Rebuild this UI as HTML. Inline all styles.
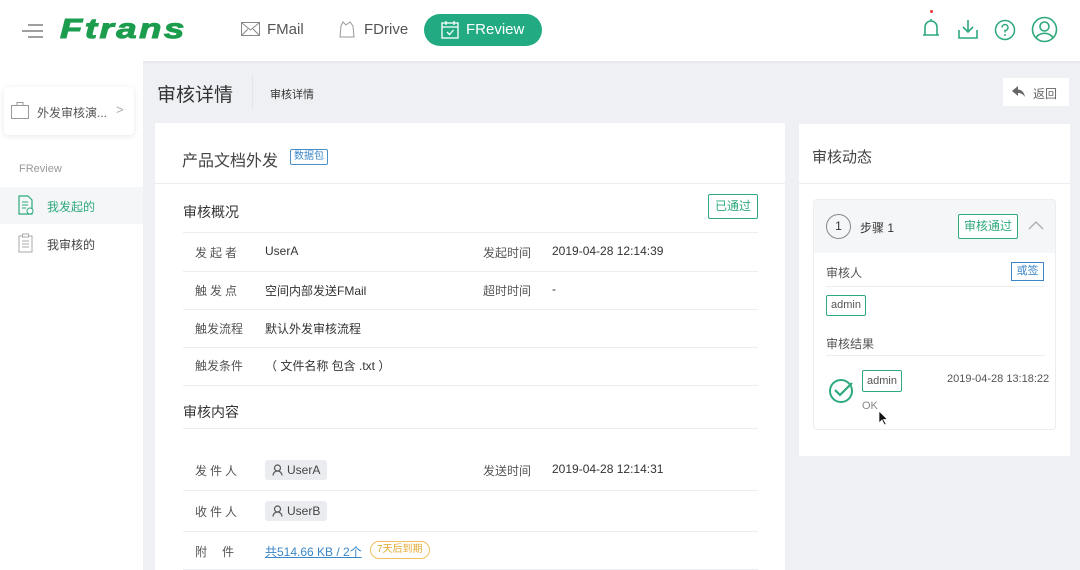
<!DOCTYPE html>
<html><head><meta charset="utf-8"><style>
*{margin:0;padding:0;box-sizing:border-box}
body{width:1080px;height:570px;overflow:hidden;background:#eef0f3;font-family:"Liberation Sans","Noto Sans CJK SC",sans-serif;color:#333;position:relative;font-size:12px}
.a{position:absolute;white-space:nowrap}
.hdr{position:absolute;left:0;top:0;width:1080px;height:61px;background:#fff;box-shadow:0 1px 3px rgba(0,0,0,.06)}
.side{position:absolute;left:0;top:61px;width:143px;height:509px;background:#fff}
.card{position:absolute;background:#fff}
.ln{position:absolute;height:1px;background:#ebedf0}
.lb{color:#555;font-size:12px}
.tag{position:absolute;border:1px solid #2eaa7c;color:#2eaa7c;border-radius:2px;background:#fff;font-size:12px;text-align:center}
.user{position:absolute;background:#ebecef;border-radius:3px;height:20px;padding:0 7px 0 22px;font-size:12px;line-height:20px;color:#444}
</style></head><body>
<div class="hdr">
 <svg class="a" style="left:22px;top:24px" width="22" height="14"><path d="M6 1H21M0 7H21M6 13H21" stroke="#666" stroke-width="1.2"/></svg>
 <div class="a" style="left:60px;top:13px;font-size:28px;font-weight:900;font-style:italic;color:#1c9d4e;letter-spacing:2px;transform:scaleX(1.3);transform-origin:left center;-webkit-text-stroke:1px #1c9d4e">Ftrans</div>
 <svg class="a" style="left:241px;top:22px" width="19" height="14"><rect x=".5" y=".5" width="18" height="13" fill="none" stroke="#888"/><path d="M1 1L9.5 8L18 1M1 13L7 7M18 13L12 7" stroke="#888" fill="none"/></svg>
 <div class="a" style="left:267px;top:21px;font-size:15px;color:#555">FMail</div>
 <svg class="a" style="left:338px;top:20px" width="18" height="19"><path d="M3 6L2 17H16L15 6L12 2L8 5L5 2Z" fill="none" stroke="#999"/></svg>
 <div class="a" style="left:364px;top:21px;font-size:15px;color:#555">FDrive</div>
 <div class="a" style="left:424px;top:14px;width:118px;height:32px;border-radius:16px;background:#22ab82"></div>
 <svg class="a" style="left:441px;top:20px" width="18" height="19"><rect x="1" y="3" width="16" height="15" fill="none" stroke="#fff" stroke-width="1.3"/><path d="M1 7H17M5 1V5M13 1V5M6 12L8.5 14.5L12.5 10" stroke="#fff" fill="none" stroke-width="1.3"/></svg>
 <div class="a" style="left:466px;top:21px;font-size:15px;color:#fff">FReview</div>
 <div class="a" style="left:930px;top:10px;width:3px;height:3px;border-radius:50%;background:#e33"></div>
 <svg class="a" style="left:921px;top:16px" width="20" height="26"><path d="M4 19V11A6 6 0 0 1 16 11V19M2 19H18M10 3V5" stroke="#2eaa7c" stroke-width="1.6" fill="none"/></svg>
 <svg class="a" style="left:957px;top:19px" width="22" height="22"><path d="M11 1V13M6 8L11 13L16 8M2 11V19H20V11" stroke="#2eaa7c" stroke-width="1.6" fill="none"/></svg>
 <svg class="a" style="left:994px;top:19px" width="22" height="22"><circle cx="11" cy="11" r="9.5" stroke="#2eaa7c" stroke-width="1.5" fill="none"/><path d="M8 8.5A3 3 0 1 1 11 11.5V13.5" stroke="#2eaa7c" stroke-width="1.5" fill="none"/><circle cx="11" cy="16" r="1" fill="#2eaa7c"/></svg>
 <svg class="a" style="left:1031px;top:16px" width="27" height="27"><circle cx="13.5" cy="13.5" r="12" stroke="#2eaa7c" stroke-width="1.6" fill="none"/><circle cx="13.5" cy="10.5" r="4.5" stroke="#2eaa7c" stroke-width="1.6" fill="none"/><path d="M5 22A9 7 0 0 1 22 22" stroke="#2eaa7c" stroke-width="1.6" fill="none"/></svg>
</div>
<div class="side">
 <div class="a" style="left:4px;top:26px;width:130px;height:48px;background:#fff;border-radius:4px;box-shadow:0 1px 6px rgba(0,0,0,.1)"></div>
 <svg class="a" style="left:11px;top:41px" width="18" height="17"><rect x=".5" y="3.5" width="17" height="13" fill="none" stroke="#999"/><path d="M6 3.5V.5H12V3.5" fill="none" stroke="#999"/></svg>
 <div class="a" style="left:37px;top:43px;font-size:12px;color:#555">外发审核演...</div>
 <div class="a" style="left:116px;top:41px;font-size:13px;color:#aaa">&gt;</div>
 <div class="a" style="left:19px;top:102px;font-size:11px;color:#999">FReview</div>
 <div class="a" style="left:0;top:126px;width:143px;height:37px;background:#f5f6f8"></div>
 <svg class="a" style="left:18px;top:134px" width="16" height="20"><path d="M1 1H10L14 5V19H1Z" fill="none" stroke="#2eaa7c" stroke-width="1.2"/><path d="M4 7H10M4 10H10M4 13H8" stroke="#2eaa7c"/><circle cx="12" cy="16" r="3" fill="#fff" stroke="#2eaa7c"/></svg>
 <div class="a" style="left:47px;top:137px;font-size:12px;color:#2eaa7c">我发起的</div>
 <svg class="a" style="left:18px;top:172px" width="16" height="20"><rect x="1" y="3" width="13" height="16" fill="none" stroke="#aaa"/><rect x="4.5" y="1" width="6" height="3" fill="#fff" stroke="#aaa"/><path d="M4 8H11M4 11H11M4 14H11" stroke="#aaa"/></svg>
 <div class="a" style="left:47px;top:175px;font-size:12px;color:#444">我审核的</div>
</div>
<div class="a" style="left:157px;top:80px;font-size:19px;color:#333">审核详情</div>
<div class="a" style="left:252px;top:75px;width:1px;height:34px;background:#e3e5e8"></div>
<div class="a" style="left:270px;top:86px;font-size:11px;color:#333">审核详情</div>
<div class="a" style="left:1003px;top:78px;width:66px;height:28px;background:#fff"></div>
<svg class="a" style="left:1012px;top:86px" width="14" height="12"><path d="M6 0L0 5L6 10V7C9 7 11 8 13 11C12 6 10 4 6 3.5Z" fill="#666"/></svg>
<div class="a" style="left:1033px;top:85px;font-size:12px;color:#666">返回</div>

<div class="card" style="left:155px;top:123px;width:630px;height:447px">
 <div class="a" style="left:27px;top:24px;font-size:16px;color:#444">产品文档外发</div>
 <div class="a" style="left:135px;top:26px;border:1px solid #4a90c8;color:#3a86c8;font-size:10px;padding:0 3px;height:16px;line-height:14px;border-radius:2px">数据包</div>
 <div class="ln" style="left:0;top:60px;width:630px"></div>
 <div class="a" style="left:28px;top:79px;font-size:14px;color:#333">审核概况</div>
 <div class="tag" style="left:553px;top:71px;width:50px;height:25px;line-height:23px">已通过</div>
 <div class="ln" style="left:28px;top:109px;width:575px"></div>
 <div class="a lb" style="left:40px;top:121px;letter-spacing:3px">发起者</div><div class="a" style="left:110px;top:121px">UserA</div>
 <div class="a lb" style="left:328px;top:121px">发起时间</div><div class="a" style="left:397px;top:121px">2019-04-28 12:14:39</div>
 <div class="ln" style="left:28px;top:148px;width:575px"></div>
 <div class="a lb" style="left:40px;top:159px;letter-spacing:3px">触发点</div><div class="a" style="left:110px;top:159px">空间内部发送FMail</div>
 <div class="a lb" style="left:328px;top:159px">超时时间</div><div class="a" style="left:397px;top:159px">-</div>
 <div class="ln" style="left:28px;top:186px;width:575px"></div>
 <div class="a lb" style="left:40px;top:197px">触发流程</div><div class="a" style="left:110px;top:197px">默认外发审核流程</div>
 <div class="ln" style="left:28px;top:224px;width:575px"></div>
 <div class="a lb" style="left:40px;top:234px">触发条件</div><div class="a" style="left:110px;top:234px">（ 文件名称 包含 .txt ）</div>
 <div class="ln" style="left:28px;top:262px;width:575px"></div>
 <div class="a" style="left:28px;top:279px;font-size:14px;color:#333">审核内容</div>
 <div class="ln" style="left:28px;top:305px;width:575px"></div>
 <div class="a lb" style="left:40px;top:339px;letter-spacing:3px">发件人</div>
 <div class="user" style="left:110px;top:337px">UserA</div>
 <svg class="a" style="left:117px;top:341px" width="11" height="12"><circle cx="5.5" cy="4" r="3" fill="none" stroke="#555" stroke-width="1.2"/><path d="M1 11.5A4.5 4.5 0 0 1 10 11.5" fill="none" stroke="#555" stroke-width="1.2"/></svg>
 <div class="a lb" style="left:328px;top:339px">发送时间</div><div class="a" style="left:397px;top:339px">2019-04-28 12:14:31</div>
 <div class="ln" style="left:28px;top:367px;width:575px"></div>
 <div class="a lb" style="left:40px;top:380px;letter-spacing:3px">收件人</div>
 <div class="user" style="left:110px;top:378px">UserB</div>
 <svg class="a" style="left:117px;top:382px" width="11" height="12"><circle cx="5.5" cy="4" r="3" fill="none" stroke="#555" stroke-width="1.2"/><path d="M1 11.5A4.5 4.5 0 0 1 10 11.5" fill="none" stroke="#555" stroke-width="1.2"/></svg>
 <div class="ln" style="left:28px;top:408px;width:575px"></div>
 <div class="a lb" style="left:40px;top:420px;letter-spacing:15px">附件</div>
 <div class="a" style="left:110px;top:420px;color:#3a86c8;text-decoration:underline">共514.66 KB / 2个</div>
 <div class="a" style="left:215px;top:418px;border:1px solid #f0c060;color:#e0a830;font-size:10px;padding:0 6px;height:18px;line-height:16px;border-radius:9px">7天后到期</div>
 <div class="ln" style="left:28px;top:446px;width:575px"></div>
</div>

<div class="card" style="left:799px;top:124px;width:271px;height:332px">
 <div class="a" style="left:13px;top:22px;font-size:15px;color:#444">审核动态</div>
 <div class="ln" style="left:0;top:59px;width:271px"></div>
 <div class="a" style="left:14px;top:75px;width:243px;height:231px;border:1px solid #ebedf0;border-radius:4px;overflow:hidden">
  <div class="a" style="left:0;top:0;width:243px;height:53px;background:#f5f6f8"></div>
  <div class="a" style="left:12px;top:14px;width:25px;height:25px;border:1px solid #888;border-radius:50%;text-align:center;line-height:23px;font-size:12px">1</div>
  <div class="a" style="left:46px;top:19px;font-size:12px">步骤 1</div>
  <div class="tag" style="left:144px;top:14px;width:60px;height:25px;line-height:23px">审核通过</div>
  <svg class="a" style="left:214px;top:20px" width="16" height="10"><path d="M1 9L8 2L15 9" stroke="#aaa" fill="none" stroke-width="1.3"/></svg>
  <div class="a" style="left:12px;top:64px;font-size:12px;color:#555">审核人</div>
  <div class="a" style="left:197px;top:62px;border:1px solid #3a86c8;color:#3a86c8;font-size:11px;width:33px;height:19px;line-height:17px;text-align:center">或签</div>
  <div class="ln" style="left:12px;top:86px;width:219px"></div>
  <div class="tag" style="left:12px;top:95px;width:40px;height:21px;line-height:19px;font-size:11px;color:#555">admin</div>
  <div class="a" style="left:12px;top:135px;font-size:12px;color:#555">审核结果</div>
  <div class="ln" style="left:12px;top:155px;width:219px"></div>
  <svg class="a" style="left:14px;top:178px" width="26" height="26"><circle cx="13" cy="13" r="11" stroke="#2eaa7c" stroke-width="2" fill="none"/><path d="M7 12L12 17L24 5" stroke="#2eaa7c" stroke-width="2.2" fill="none"/></svg>
  <div class="tag" style="left:48px;top:170px;width:40px;height:22px;line-height:20px;font-size:11px;color:#555">admin</div>
  <div class="a" style="left:48px;top:200px;font-size:11px;color:#888">OK</div>
  <div class="a" style="left:133px;top:173px;font-size:11px;color:#555">2019-04-28 13:18:22</div>
 </div>
</div>
<svg class="a" style="left:878px;top:410px" width="10" height="16"><path d="M1 1V13L4 10L6.5 15L8 14L5.5 9.5H9.5Z" fill="#111" stroke="#fff" stroke-width=".7"/></svg>
</body></html>
